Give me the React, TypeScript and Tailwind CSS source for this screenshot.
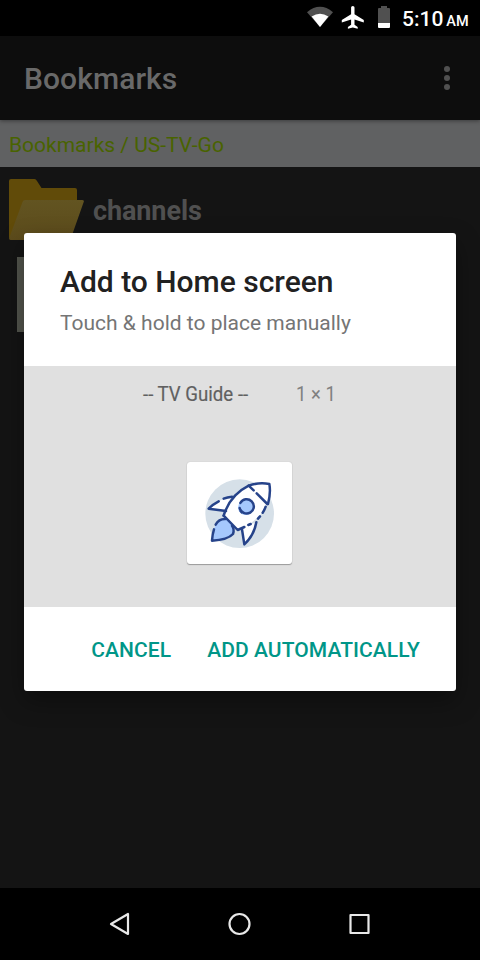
import React from "react";

function StatusBar() {
  return (
    <div className="flex h-9 items-center bg-black text-white">
      <svg className="ml-[306px] h-9 w-[90px]" viewBox="306 0 90 36">
        <path d="M307 12.2Q320 1.5 333 12.2L320 27Z" fill="#505050" />
        <path d="M311.6 16.6Q320 11 328.4 16.6L320 27Z" fill="#fff" />
        <path
          d="M352.8 6c1 0 1.7.8 1.7 1.8v6.4l9.3 5.8v2.4l-9.3-2.9v5.2l3.2 2.3v1.8l-4.9-1.4-4.9 1.4V27l3.2-2.3v-5.2l-9.3 2.900V20l9.3-5.800V7.800c0-1 .7-1.800 1.700-1.800Z"
          fill="#fff"
        />
        <path d="M381 6h6v2h2q1 0 1 1v14h-12V9q0-1 1-1h2Z" fill="#505050" />
        <path d="M378 23h12v4q0 1-1 1h-10q-1 0-1-1Z" fill="#fff" />
      </svg>
      <div className="ml-1.5 flex items-baseline whitespace-nowrap pt-1 font-medium">
        <span className="text-[21px]">5:10</span>
        <span className="ml-[3px] text-[14.500px]">AM</span>
      </div>
    </div>
  );
}

function FolderIcon() {
  return (
    <svg className="h-[62px] w-[75px] shrink-0" viewBox="0 0 75 62">
      <defs>
        <linearGradient id="folderFront" x1="0" y1="0" x2="0" y2="1">
          <stop offset="0" stopColor="#625421" />
          <stop offset="1" stopColor="#5c4b1b" />
        </linearGradient>
      </defs>
      <path d="M0 2Q0 0 2 0H25.500Q27 0 28 2L32.500 9H66Q68 9 68 11V40L60 60H2Q0 60 0 58Z" fill="#614b09" />
      <path
        d="M16 21H73Q75.500 21 74.700 23L62 59Q61 61 59 61H2Q-.5 61 .4 58.500L13.500 23Q14.300 21 16 21Z"
        fill="url(#folderFront)"
      />
    </svg>
  );
}

function Rocket() {
  return (
    <svg className="h-[102px] w-[104px]" viewBox="22 20 312 306">
      <circle cx="180" cy="175" r="103" fill="#d6e0e8" />
      <g stroke="#26438a" strokeWidth="7.500" strokeLinecap="round" strokeLinejoin="round">
        <path d="M132 181L174 224Q238 198 262 148Q274 119 269 86Q233 78 207 91Q157 119 132 181Z" fill="#fff" stroke="none" />
        <path d="M158 124L135 129L118 138L87 161L139 168ZM187 216L194 267Q222 239 230 201Z" fill="#fff" stroke="none" />
        <path d="M108 208Q121 188 137 191Q163 203 163 222Q156 251 97 256Q98 229 103 222Z" fill="#a5c8fd" stroke="none" />
        <circle cx="198" cy="156" r="23" fill="#a5c8fd" stroke="none" />
        <g fill="none">
          <path d="M132 181Q151 119 207 91Q238 80 269 86Q274 112 265 146M258 154Q254 165 249 172" />
          <path d="M241 183L235 190M213 206L206 209M194 215L174 224L132 181" />
          <path d="M207 91L222 105M231 114L263 146" />
          <path d="M157 124Q143 125 132 130M117 138Q101 146 87 160L139 167" />
          <path d="M230 201Q223 241 194 267L187 222" />
          <path d="M108 208Q118 190 137 191M103 222Q98 237 97 256Q145 253 160 236Q165 222 157 211" />
          <path d="M182 143A21.500 21.500 0 1 1 180 158M183 167L186 171" />
        </g>
      </g>
    </svg>
  );
}

function AddDialog() {
  return (
    <div className="absolute left-6 top-[233px] flex h-[458px] w-[432px] flex-col overflow-hidden rounded-[3px] bg-white shadow-[0_10px_24px_rgba(0,0,0,0.35)]">
      <div className="h-[133px] px-9 pt-[31px]">
        <h2 className="whitespace-nowrap text-[30px] font-medium leading-9 text-[#212121]">Add to Home screen</h2>
        <p className="mt-[7px] whitespace-nowrap text-[21px] leading-8 text-[#757575]">Touch &amp; hold to place manually</p>
      </div>
      <div className="flex h-[241px] flex-col bg-[#e0e0e0] pt-[13px]">
        <div className="flex h-[30px] w-full items-center pl-[119px] text-[21px] leading-[30px]">
          <span className="w-[153px] origin-left scale-x-[0.888] whitespace-nowrap text-[#606060] [-webkit-text-stroke:0.200px_#606060]">-- TV Guide --</span>
          <span className="origin-left scale-x-[0.880] whitespace-nowrap text-[#808080]">1 × 1</span>
        </div>
        <div className="ml-[163px] mt-[53px] h-[102px] w-[105px] rounded-[3px] bg-white shadow-[0_1px_1px_#999,0_0_1px_#aaa]">
          <Rocket />
        </div>
      </div>
      <div className="flex h-[84px] items-center justify-end gap-9 whitespace-nowrap pr-9 pt-[3px] text-[21px] font-medium text-[#009688]">
        <button className="tracking-[0.080px]">CANCEL</button>
        <button className="tracking-[0.080px]">ADD AUTOMATICALLY</button>
      </div>
    </div>
  );
}

export default function App() {
  return (
    <div className="relative flex h-[960px] w-[480px] flex-col overflow-hidden bg-[#141414] font-['Roboto',sans-serif]">
      <StatusBar />
      <header className="z-10 flex h-[84px] items-center justify-between bg-[#0d0d0d] pl-6 pr-[30px] shadow-[0_1px_4px_rgba(0,0,0,0.4)]">
        <h1 className="text-[30px] font-medium tracking-[0.080px] text-[#696969]">Bookmarks</h1>
        <div className="flex flex-col gap-[3px]">
          <i className="size-1.5 rounded-full bg-[#505050]" />
          <i className="size-1.5 rounded-full bg-[#505050]" />
          <i className="size-1.5 rounded-full bg-[#505050]" />
        </div>
      </header>
      <div className="flex h-[47px] items-center bg-[#606162] pl-[9px] pt-1 text-[21px] text-[#496300]">
        <span>Bookmarks / US-TV-Go</span>
      </div>
      <main className="flex-1 pl-[9px] pt-3">
        <div className="flex items-center gap-[9px]">
          <FolderIcon />
          <span className="pt-0.5 text-[27px] font-bold tracking-[-0.100px] text-[#505050]">channels</span>
        </div>
        <div className="ml-2 mt-4 h-[75px] w-[75px] bg-[#53554d]" />
      </main>
      <nav className="h-[72px] bg-black">
        <svg className="h-[72px] w-[480px]" viewBox="0 888 480 72" fill="none" stroke="#e8e8e8" strokeWidth="2.200" strokeLinejoin="round">
          <path d="M111 924L128 914V934Z" />
          <circle cx="239.500" cy="924" r="10" />
          <rect x="350.500" y="915" width="18" height="18" />
        </svg>
      </nav>
      <AddDialog />
    </div>
  );
}
